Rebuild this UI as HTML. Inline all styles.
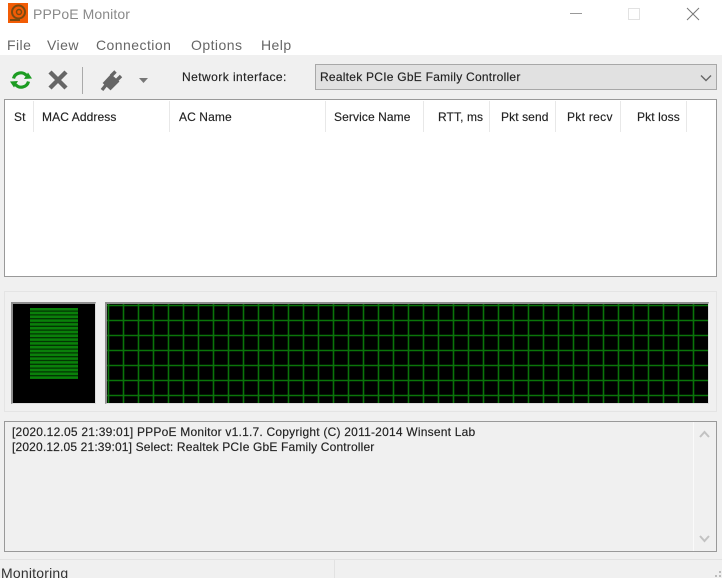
<!DOCTYPE html>
<html><head><meta charset="utf-8"><style>
html,body{margin:0;padding:0;width:722px;height:578px;overflow:hidden;background:#fff}
body{position:relative;font-family:"Liberation Sans",sans-serif;color:#222}
.a{position:absolute;box-sizing:border-box}
.t{position:absolute;white-space:nowrap;line-height:16px}
.m{font-size:14px;color:#666;top:37px;letter-spacing:.45px}
.h{font-size:12px;color:#222;top:109px;letter-spacing:.1px;-webkit-text-stroke:.15px #222}
.s{position:absolute;top:101px;width:1px;height:31px;background:#e8e8e8}
</style></head><body>
<svg class="a" style="left:8px;top:3px" width="20" height="20" viewBox="0 0 20 20"><rect width="20" height="20" fill="#f25c05"/><circle cx="10.5" cy="9" r="6.5" fill="none" stroke="#7a4a10" stroke-width="2"/><circle cx="11" cy="9" r="2.5" fill="none" stroke="#7a4a10" stroke-width="1.5"/><path d="M2 17H12" stroke="#7a4a10" stroke-width="2"/></svg>
<div class="t" style="left:33px;top:6px;font-size:14px;color:#8a8a8a;letter-spacing:.1px">PPPoE Monitor</div>
<div class="a" style="left:570px;top:13px;width:12px;height:1px;background:#999"></div>
<div class="a" style="left:628px;top:8px;width:12px;height:12px;border:1px solid #e2e2e2"></div>
<svg class="a" style="left:686px;top:7px" width="14" height="14"><path d="M1 1L13 13M13 1L1 13" stroke="#777" stroke-width="1"/></svg>
<div class="t m" style="left:7px">File</div>
<div class="t m" style="left:47px">View</div>
<div class="t m" style="left:96px">Connection</div>
<div class="t m" style="left:191px">Options</div>
<div class="t m" style="left:261px">Help</div>

<div class="a" style="left:0;top:55px;width:722px;height:523px;background:#f0f0f0"></div>

<svg class="a" style="left:9px;top:68px" width="24" height="24" viewBox="0 0 24 24"><path d="M4.5 10.5A7.5 7.5 0 0 1 17.5 7.5M19.5 13.5A7.5 7.5 0 0 1 6.5 16.5" fill="none" stroke="#1c9c22" stroke-width="3.2"/><path d="M15 11L23 10.5L19 4.5ZM9 13L1 13.5L5 19.5Z" fill="#1c9c22"/></svg>
<svg class="a" style="left:47px;top:69px" width="22" height="22"><path d="M3 3L19 19M19 3L3 19" stroke="#666" stroke-width="4.4"/></svg>
<div class="a" style="left:82px;top:67px;width:1px;height:27px;background:#aaa"></div>
<svg class="a" style="left:99px;top:70px" width="24" height="22" viewBox="0 0 24 22"><path d="M3 20L7 15" stroke="#666" stroke-width="3.4" fill="none"/><path d="M5 13L12 5.5L19 11.5L11.5 19Z" fill="#666" stroke="#666" stroke-width="2"/><path d="M12 6L16.5 1.5M17.5 10.5L22 6" stroke="#666" stroke-width="3.4" fill="none"/></svg>
<svg class="a" style="left:138px;top:77px" width="11" height="7"><path d="M1 1H10L5.5 6Z" fill="#777"/></svg>
<div class="t" style="left:182px;top:69px;font-size:12px;color:#222;letter-spacing:.45px;-webkit-text-stroke:.15px #222">Network interface:</div>
<div class="a" style="left:315px;top:64px;width:402px;height:26px;background:#e1e1e1;border:1px solid #a8a8a8"></div>
<div class="t" style="left:320px;top:69px;font-size:12px;color:#222;letter-spacing:.25px;-webkit-text-stroke:.15px #222">Realtek PCIe GbE Family Controller</div>
<svg class="a" style="left:699px;top:74px" width="14" height="9"><path d="M2 1.5L7 6.5L12 1.5" fill="none" stroke="#666" stroke-width="1.4"/></svg>

<div class="a" style="left:4px;top:99px;width:713px;height:178px;background:#fff;border:1px solid #999"></div>
<div class="s" style="left:33px"></div><div class="s" style="left:169px"></div><div class="s" style="left:325px"></div><div class="s" style="left:423px"></div><div class="s" style="left:489px"></div><div class="s" style="left:555px"></div><div class="s" style="left:620px"></div><div class="s" style="left:686px"></div>
<div class="t h" style="left:14px">St</div>
<div class="t h" style="left:42px">MAC Address</div>
<div class="t h" style="left:179px">AC Name</div>
<div class="t h" style="left:334px">Service Name</div>
<div class="t h" style="left:438px">RTT, ms</div>
<div class="t h" style="left:501px">Pkt send</div>
<div class="t h" style="left:567px;letter-spacing:.3px">Pkt recv</div>
<div class="t h" style="left:637px">Pkt loss</div>

<div class="a" style="left:4px;top:291px;width:713px;height:121px;border:1px solid #e4e4e4"></div>
<div class="a" style="left:11px;top:302px;width:85px;height:102px;background:#000;border:2px solid #8f8f8f;border-right-color:#ddd;border-bottom-color:#ddd;border-right-width:1px;border-bottom-width:1px"></div>
<svg class="a" style="left:30px;top:308px" width="48" height="71"><rect width="48" height="71" fill="#033503"/><path d="M0 1.2H48M0 5H48M0 8.8H48M0 12.6H48M0 16.4H48M0 20.2H48M0 24H48M0 27.8H48M0 31.6H48M0 35.4H48M0 39.2H48M0 43H48M0 46.8H48M0 50.6H48M0 54.4H48M0 58.2H48M0 62H48M0 65.8H48M0 69.6H48" stroke="#0a800a" stroke-width="2.5"/></svg>
<div class="a" style="left:105px;top:302px;width:604px;height:102px;background:#000;border:2px solid #8f8f8f;border-right-color:#ddd;border-bottom-color:#ddd;border-right-width:1px;border-bottom-width:1px"></div>
<svg class="a" style="left:107px;top:304px" width="601" height="99"><path d="M1.5 0V99M16.5 0V99M31.5 0V99M46.5 0V99M61.5 0V99M76.5 0V99M91.5 0V99M106.5 0V99M121.5 0V99M136.5 0V99M151.5 0V99M166.5 0V99M181.5 0V99M196.5 0V99M211.5 0V99M226.5 0V99M241.5 0V99M256.5 0V99M271.5 0V99M286.5 0V99M301.5 0V99M316.5 0V99M331.5 0V99M346.5 0V99M361.5 0V99M376.5 0V99M391.5 0V99M406.5 0V99M421.5 0V99M436.5 0V99M451.5 0V99M466.5 0V99M481.5 0V99M496.5 0V99M511.5 0V99M526.5 0V99M541.5 0V99M556.5 0V99M571.5 0V99M586.5 0V99M0 1.5H601M0 16.5H601M0 31.5H601M0 46.5H601M0 61.5H601M0 76.5H601M0 91.5H601" stroke="#0a740a" stroke-width="1.6" fill="none"/></svg>

<div class="a" style="left:4px;top:421px;width:713px;height:131px;background:#f0f0f0;border:1px solid #999"></div>
<div class="a" style="left:693px;top:422px;width:1px;height:129px;background:#fafafa"></div>
<svg class="a" style="left:698px;top:429px" width="13" height="10"><path d="M2 8L6.5 3L11 8" fill="none" stroke="#c2c2c2" stroke-width="2"/></svg>
<svg class="a" style="left:698px;top:534px" width="13" height="10"><path d="M2 2L6.5 7L11 2" fill="none" stroke="#c2c2c2" stroke-width="2"/></svg>
<div class="t" style="left:12px;top:425px;font-size:12px;color:#222;line-height:15px;letter-spacing:.22px;-webkit-text-stroke:.15px #222">[2020.12.05 21:39:01] PPPoE Monitor v1.1.7. Copyright (C) 2011-2014 Winsent Lab</div>
<div class="t" style="left:12px;top:440px;font-size:12px;color:#222;line-height:15px;letter-spacing:.16px;-webkit-text-stroke:.15px #222">[2020.12.05 21:39:01] Select: Realtek PCIe GbE Family Controller</div>

<div class="a" style="left:0;top:559px;width:722px;height:1px;background:#e2e2e2"></div>
<div class="a" style="left:334px;top:560px;width:1px;height:18px;background:#e2e2e2"></div>
<div class="t" style="left:1px;top:565px;font-size:14px;color:#333;letter-spacing:.2px">Monitoring</div>
<svg class="a" style="left:714px;top:570px" width="8" height="8"><path d="M5 1h2v2h-2zM1 5h2v2h-2zM5 5h2v2h-2z" fill="#bbb"/></svg>
</body></html>
